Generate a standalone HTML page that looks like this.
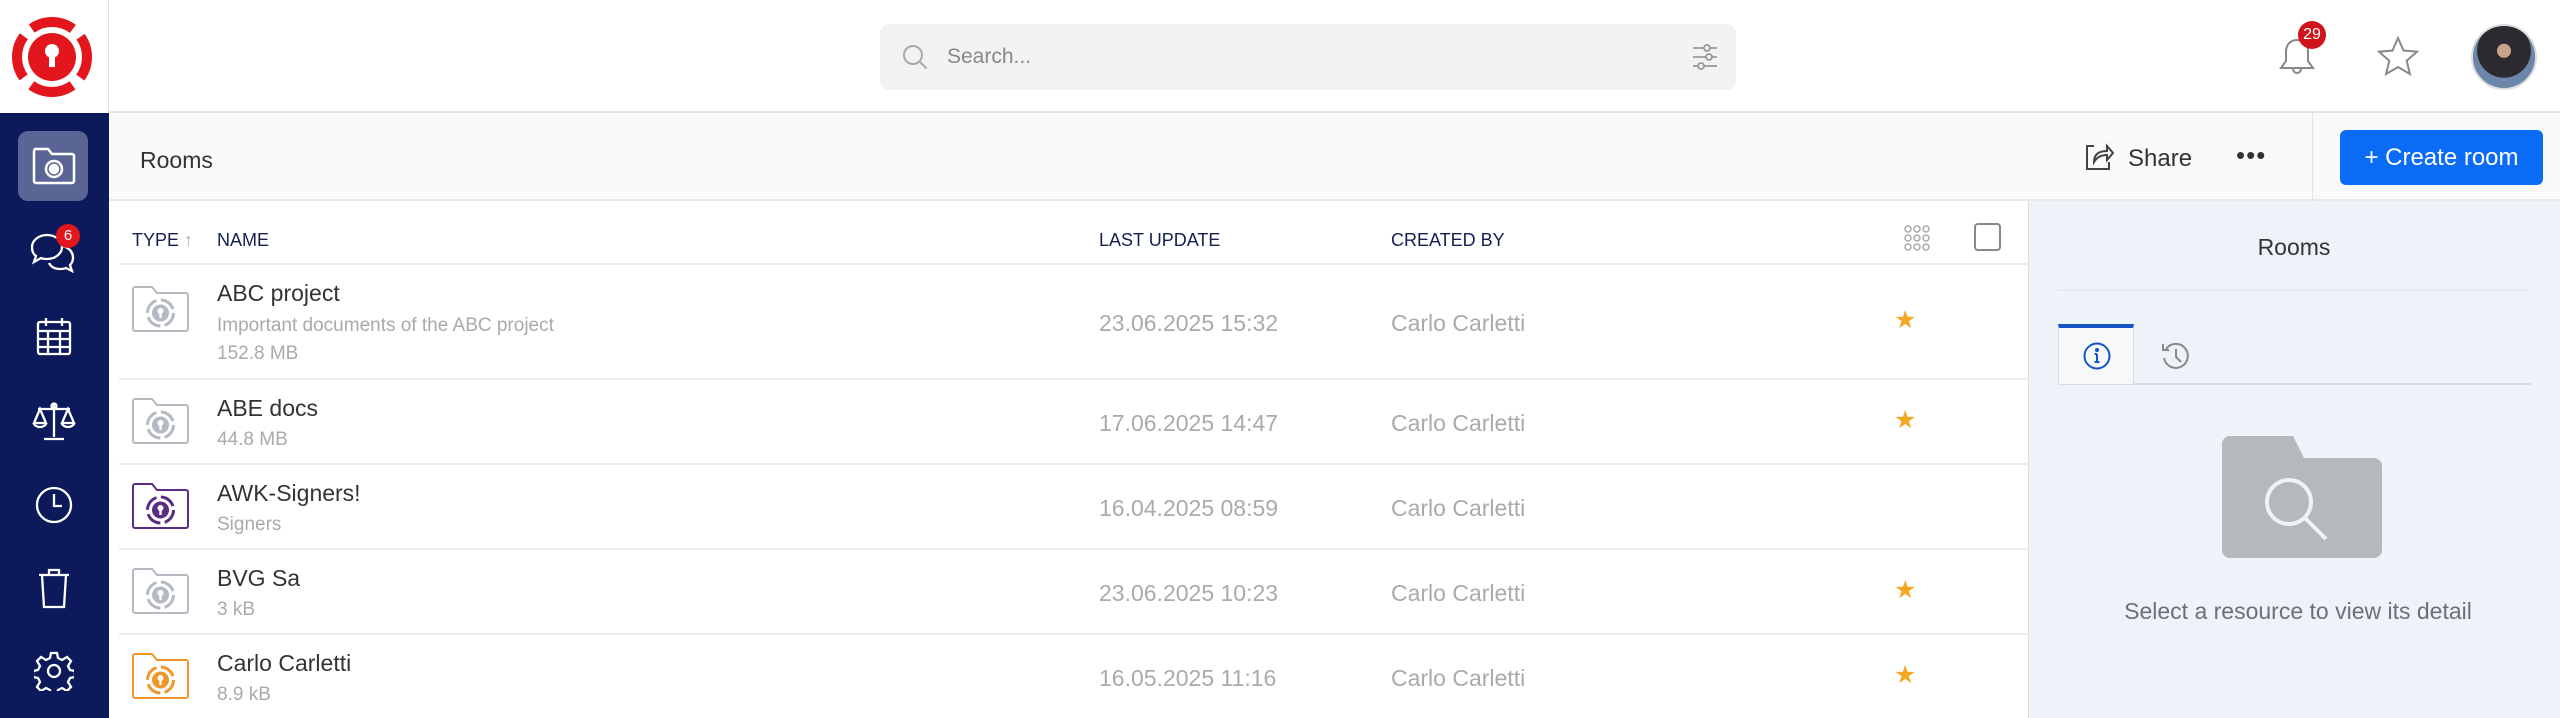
<!DOCTYPE html>
<html><head><meta charset="utf-8"><style>
*{box-sizing:border-box;margin:0;padding:0}
body{width:2560px;height:718px;overflow:hidden;background:#fff;font-family:"Liberation Sans",Arial,sans-serif;position:relative}
.abs{position:absolute}
.side{left:0;top:113px;width:109px;height:605px;background:#0c1a5b}
.logo{left:0;top:0;width:109px;height:113px;background:#fff;border-right:1px solid #e2e2e2}
.top{left:109px;top:0;width:2451px;height:113px;border-bottom:2px solid #e4e4e4;background:#fff}
.search{left:880px;top:24px;width:856px;height:66px;background:#f2f2f2;border-radius:10px}
.hdr{left:109px;top:113px;width:2451px;height:88px;background:#f9fafb;border-bottom:2px solid #e8e8e8}
.btn{left:2340px;top:130px;width:203px;height:55px;background:#0a6cf5;border-radius:6px;color:#fff;font-size:24px;text-align:center;line-height:55px}
.rp{left:2028px;top:201px;width:532px;height:517px;background:#edf3f9;border-left:1px solid #d8e0e8}
.th{font-size:18px;color:#14204f;top:230px}
.row{left:119px;width:1909px;border-bottom:2px solid #ececec}
.nm{font-size:23px;color:#333;left:217px}
.sub{font-size:19px;color:#aaa;left:217px}
.dt{font-size:23px;color:#aaa}
.star{font-size:25px;color:#f5a623;left:1894px}
.si{left:54px;transform:translate(-50%,-50%)}
</style></head><body>
<div class="abs logo"><svg width="109" height="113" viewBox="0 0 109 113">
<g fill="none" stroke="#e3161e" stroke-width="10">
<circle cx="52" cy="57" r="35" stroke-dasharray="44 11" stroke-dashoffset="22"/></g>
<circle cx="52" cy="57" r="24" fill="#e3161e"/>
<circle cx="52" cy="51" r="7" fill="#fff"/><rect x="49" y="53" width="6" height="14" fill="#fff"/>
</svg></div>
<div class="abs side"></div>
<div class="abs" style="left:18px;top:131px;width:70px;height:70px;background:#5a6596;border-radius:10px"></div>
<svg class="abs si" style="top:166px" width="44" height="38" viewBox="0 0 44 38" fill="none" stroke="#fff" stroke-width="2.5"><path d="M3 2h13l4 5h20a2 2 0 0 1 2 2v25a2 2 0 0 1-2 2H4a2 2 0 0 1-2-2V4z"/><circle cx="22" cy="22" r="8"/><circle cx="22" cy="22" r="4" fill="#fff"/></svg>
<svg class="abs si" style="top:252px" width="50" height="46" viewBox="0 0 50 46" fill="none" stroke="#fff" stroke-width="2.3"><path d="M18 6c9 0 15 6 15 12s-6 12-15 12c-2 0-4 0-6-1l-7 4 2-6c-3-2-4-5-4-9C3 12 9 6 18 6z"/><path d="M34 17c6 2 10 6 10 12 0 3-1 5-3 7l2 6-6-3c-2 1-4 1-6 1-5 0-9-2-11-6"/></svg>
<div class="abs" style="left:56px;top:224px;width:24px;height:24px;border-radius:50%;background:#e3161e;color:#fff;font-size:15px;text-align:center;line-height:24px">6</div>
<svg class="abs si" style="top:336px" width="36" height="40" viewBox="0 0 36 40" fill="none" stroke="#fff" stroke-width="2.3"><rect x="2" y="6" width="32" height="32" rx="2"/><path d="M10 2v8M26 2v8M2 15h32M2 23h32M2 31h32M12 15v23M24 15v23"/></svg>
<svg class="abs si" style="top:421px" width="44" height="40" viewBox="0 0 44 40" fill="none" stroke="#fff" stroke-width="2.3"><path d="M22 2v34M12 38h20M6 8h32M22 4"/><circle cx="22" cy="5" r="2.5"/><path d="M8 8L2 22h12zM36 8l-6 14h12zM2 22a6 4 0 0 0 12 0M30 22a6 4 0 0 0 12 0"/></svg>
<svg class="abs si" style="top:505px" width="40" height="40" viewBox="0 0 40 40" fill="none" stroke="#fff" stroke-width="2.3"><circle cx="20" cy="20" r="17"/><path d="M20 9v12h8"/></svg>
<svg class="abs si" style="top:588px" width="34" height="42" viewBox="0 0 34 42" fill="none" stroke="#fff" stroke-width="2.3"><path d="M2 8h30M12 8V3h10v5M5 8l2 32h20l2-32"/></svg>
<svg class="abs si" style="top:671px" width="40" height="40" viewBox="0 0 40 40" fill="none" stroke="#fff" stroke-width="2.3"><path d="M17 2h6l1 5 4 2 5-3 4 4-3 5 2 4 5 1v6l-5 1-2 4 3 5-4 4-5-3-4 2-1 5h-6l-1-5-4-2-5 3-4-4 3-5-2-4-5-1v-6l5-1 2-4-3-5 4-4 5 3 4-2z"/><circle cx="20" cy="20" r="6"/></svg>

<div class="abs top"></div>
<div class="abs search">
<svg class="abs" style="left:22px;top:20px" width="26" height="26" viewBox="0 0 26 26" fill="none" stroke="#aaa" stroke-width="2"><circle cx="11" cy="11" r="9"/><path d="M17.5 17.5l7 7"/></svg>
<div class="abs" style="left:67px;top:21px;font-size:21px;color:#888">Search...</div>
<svg class="abs" style="left:810px;top:18px" width="30" height="30" viewBox="0 0 30 30" fill="none" stroke="#999" stroke-width="1.8"><path d="M3 6h24M3 15h24M3 24h24"/><circle cx="17" cy="6" r="3" fill="#f2f2f2"/><circle cx="19" cy="15" r="3" fill="#f2f2f2"/><circle cx="11" cy="24" r="3" fill="#f2f2f2"/></svg>
</div>
<svg class="abs" style="left:2278px;top:36px" width="38" height="42" viewBox="0 0 38 42" fill="none" stroke="#888" stroke-width="2"><path d="M19 4c-7 0-11 5-11 12v9l-5 7h32l-5-7v-9c0-7-4-12-11-12zM15 33a4 4 0 0 0 8 0"/></svg>
<div class="abs" style="left:2298px;top:21px;width:28px;height:28px;border-radius:50%;background:#d1141b;color:#fff;font-size:16px;text-align:center;line-height:28px">29</div>
<svg class="abs" style="left:2377px;top:36px" width="42" height="40" viewBox="0 0 42 40" fill="none" stroke="#888" stroke-width="2"><path d="M21 2l5.5 12.5 13.5 1.2-10.3 9 3.2 13.3L21 31l-11.9 7 3.2-13.3-10.3-9 13.5-1.2z"/></svg>
<div class="abs" style="left:2471px;top:24px;width:66px;height:66px;border-radius:50%;background:radial-gradient(circle at 50% 40%,#c9a48a 0 14%,#2a2a30 15% 55%,#6b86a8 56%);border:2px solid #ddd"></div>

<div class="abs hdr"></div>
<div class="abs" style="left:140px;top:147px;font-size:23px;color:#333">Rooms</div>
<svg class="abs" style="left:2084px;top:142px" width="30" height="30" viewBox="0 0 30 30" fill="none" stroke="#444" stroke-width="2"><path d="M10 4H3v23h22v-7"/><path d="M10 20c0-8 5-11 13-11V4l6 7-6 7v-5c-6 0-10 2-13 7z"/></svg>
<div class="abs" style="left:2128px;top:145px;font-size:24px;color:#333">Share</div>
<div class="abs" style="left:2236px;top:140px;font-size:26px;color:#333;letter-spacing:1px">•••</div>
<div class="abs" style="left:2312px;top:113px;width:1px;height:88px;background:#e2e2e2"></div>
<div class="abs btn">+ Create room</div>

<div class="abs th" style="left:132px">TYPE <span style="color:#aaa">↑</span></div>
<div class="abs th" style="left:217px">NAME</div>
<div class="abs th" style="left:1099px">LAST UPDATE</div>
<div class="abs th" style="left:1391px">CREATED BY</div>
<svg class="abs" style="left:1903px;top:224px" width="28" height="28" viewBox="0 0 28 28" fill="none" stroke="#aaa" stroke-width="1.5"><g><circle cx="5" cy="5" r="3"/><circle cx="14" cy="5" r="3"/><circle cx="23" cy="5" r="3"/><circle cx="5" cy="14" r="3"/><circle cx="14" cy="14" r="3"/><circle cx="23" cy="14" r="3"/><circle cx="5" cy="23" r="3"/><circle cx="14" cy="23" r="3"/><circle cx="23" cy="23" r="3"/></g></svg>
<div class="abs" style="left:1974px;top:223px;width:27px;height:28px;border:2px solid #888;border-radius:4px"></div>
<div class="abs row" style="top:263px;height:2px"></div>

<div class="abs row" style="top:265px;height:115px"></div>
<div class="abs row" style="top:380px;height:85px"></div>
<div class="abs row" style="top:465px;height:85px"></div>
<div class="abs row" style="top:550px;height:85px"></div>

<svg width="0" height="0" style="position:absolute"><defs><g id="fd"><path d="M3 2h17l5 6h29a2 2 0 0 1 2 2v34a2 2 0 0 1-2 2H3a2 2 0 0 1-2-2V4a2 2 0 0 1 2-2z" fill="none" stroke-width="2"/><circle cx="28.5" cy="28" r="13" fill="none" stroke-width="3" stroke-dasharray="16 4.4"/><circle cx="28.5" cy="28" r="8.5" stroke="none"/><circle cx="28.5" cy="26" r="3" fill="#fff" stroke="none"/><rect x="27.3" y="27" width="2.4" height="6" fill="#fff" stroke="none"/></g></defs></svg>
<svg class="abs" style="left:132px;top:285px" width="58" height="48" viewBox="0 0 58 48" stroke="#b5b9c2" fill="#b5b9c2"><use href="#fd"/></svg>
<svg class="abs" style="left:132px;top:397px" width="58" height="48" viewBox="0 0 58 48" stroke="#b5b9c2" fill="#b5b9c2"><use href="#fd"/></svg>
<svg class="abs" style="left:132px;top:482px" width="58" height="48" viewBox="0 0 58 48" stroke="#5a2d82" fill="#5a2d82"><use href="#fd"/></svg>
<svg class="abs" style="left:132px;top:567px" width="58" height="48" viewBox="0 0 58 48" stroke="#b5b9c2" fill="#b5b9c2"><use href="#fd"/></svg>
<svg class="abs" style="left:132px;top:652px" width="58" height="48" viewBox="0 0 58 48" stroke="#f0962a" fill="#f0962a"><use href="#fd"/></svg>

<div class="abs nm" style="top:280px">ABC project</div>
<div class="abs sub" style="top:315px">Important documents of the ABC project</div>
<div class="abs sub" style="top:343px">152.8 MB</div>
<div class="abs dt" style="left:1099px;top:310px">23.06.2025 15:32</div>
<div class="abs dt" style="left:1391px;top:310px">Carlo Carletti</div>
<div class="abs star" style="top:305px">★</div>

<div class="abs nm" style="top:395px">ABE docs</div>
<div class="abs sub" style="top:429px">44.8 MB</div>
<div class="abs dt" style="left:1099px;top:410px">17.06.2025 14:47</div>
<div class="abs dt" style="left:1391px;top:410px">Carlo Carletti</div>
<div class="abs star" style="top:405px">★</div>

<div class="abs nm" style="top:480px">AWK-Signers!</div>
<div class="abs sub" style="top:514px">Signers</div>
<div class="abs dt" style="left:1099px;top:495px">16.04.2025 08:59</div>
<div class="abs dt" style="left:1391px;top:495px">Carlo Carletti</div>

<div class="abs nm" style="top:565px">BVG Sa</div>
<div class="abs sub" style="top:599px">3 kB</div>
<div class="abs dt" style="left:1099px;top:580px">23.06.2025 10:23</div>
<div class="abs dt" style="left:1391px;top:580px">Carlo Carletti</div>
<div class="abs star" style="top:575px">★</div>

<div class="abs nm" style="top:650px">Carlo Carletti</div>
<div class="abs sub" style="top:684px">8.9 kB</div>
<div class="abs dt" style="left:1099px;top:665px">16.05.2025 11:16</div>
<div class="abs dt" style="left:1391px;top:665px">Carlo Carletti</div>
<div class="abs star" style="top:660px">★</div>

<div class="abs rp"></div>
<div class="abs" style="left:2028px;top:234px;width:532px;text-align:center;font-size:23px;color:#333">Rooms</div>
<div class="abs" style="left:2058px;top:290px;width:473px;height:1px;background:#dde5ed"></div>
<div class="abs" style="left:2058px;top:383px;width:473px;height:2px;background:#d5dde6"></div>
<div class="abs" style="left:2058px;top:324px;width:76px;height:60px;background:#f6f8fa;border-top:4px solid #1553c7;border-left:1px solid #d5dde6;border-right:1px solid #d5dde6"></div>
<svg class="abs" style="left:2082px;top:341px" width="30" height="30" viewBox="0 0 30 30" fill="none" stroke="#1553c7" stroke-width="2"><circle cx="15" cy="15" r="12.5"/><path d="M15 13v8M12.5 21h5M12.5 13H15" /><circle cx="15" cy="9" r="1" fill="#1553c7"/></svg>
<svg class="abs" style="left:2160px;top:340px" width="32" height="32" viewBox="0 0 32 32" fill="none" stroke="#888" stroke-width="2"><path d="M6 9a12 12 0 1 1-2 9"/><path d="M3 4v6h6"/><path d="M16 9v8l5 5"/></svg>
<svg class="abs" style="left:2222px;top:436px" width="160" height="122" viewBox="0 0 160 122"><path d="M0 8a8 8 0 0 1 8-8h63l11 22h70a8 8 0 0 1 8 8v84a8 8 0 0 1-8 8H8a8 8 0 0 1-8-8z" fill="#b5b8bd"/><circle cx="67" cy="66" r="22" fill="none" stroke="#edf3f9" stroke-width="4"/><path d="M83 82l21 21" stroke="#edf3f9" stroke-width="4"/></svg>
<div class="abs" style="left:2028px;top:598px;width:540px;text-align:center;font-size:23px;color:#6b7078">Select a resource to view its detail</div>
</body></html>
